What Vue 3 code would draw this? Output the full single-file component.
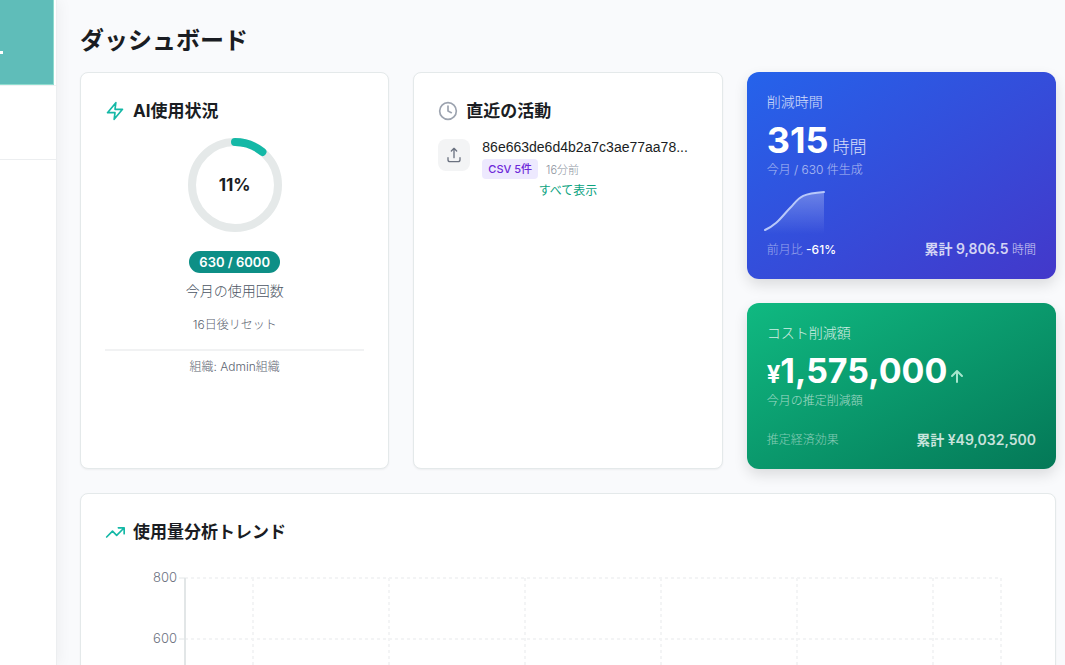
<script setup>
import { ref, computed, onMounted, onBeforeUnmount } from 'vue'

const usage = { percent: 11, used: 630, limit: 6000 }
const radius = 43
const circumference = 2 * Math.PI * radius
const dash = computed(() => `${(circumference * usage.percent) / 100} ${circumference}`)

const chart = ref(null)
const chartWidth = ref(926)
const axisX = 80
const top = 8
const step = 61
const ticks = [800, 600, 400, 200, 0]
const plotRight = computed(() => chartWidth.value - 30)
const columns = computed(() => {
  const band = (plotRight.value - axisX) / 6
  const xs = [0, 1, 2, 3, 4, 5].map((i) => Math.round(axisX + band * (i + 0.5)))
  return [...xs, plotRight.value]
})

let observer
onMounted(() => {
  observer = new ResizeObserver(([entry]) => {
    chartWidth.value = Math.round(entry.contentRect.width)
  })
  observer.observe(chart.value)
})
onBeforeUnmount(() => observer.disconnect())
</script>

<template>
  <div class="shell">
    <aside class="sidebar">
      <div class="brand"><span class="brand-mark"></span></div>
      <div class="sidebar-section"></div>
    </aside>

    <main class="main">
      <h1>ダッシュボード</h1>

      <div class="cards">
        <section class="card">
          <h2>
            <svg class="icon teal" viewBox="0 0 24 24"><path d="M13 2 3 14h9l-1 8 10-12h-9l1-8z" /></svg>
            <span>AI使用状況</span>
          </h2>
          <div class="usage">
            <div class="ring">
              <svg viewBox="0 0 96 96">
                <circle class="track" cx="48" cy="48" :r="radius" />
                <circle class="value" cx="48" cy="48" :r="radius" :stroke-dasharray="dash" transform="rotate(-90 48 48)" />
              </svg>
              <strong>{{ usage.percent }}%</strong>
            </div>
            <span class="pill">{{ usage.used }} / {{ usage.limit }}</span>
            <p class="usage-label">今月の使用回数</p>
            <p class="small">16日後リセット</p>
          </div>
          <p class="small org">組織: Admin組織</p>
        </section>

        <section class="card">
          <h2>
            <svg class="icon gray" viewBox="0 0 24 24"><circle cx="12" cy="12" r="10" /><path d="M12 6v6l4 2" /></svg>
            <span>直近の活動</span>
          </h2>
          <div class="activity">
            <div class="activity-icon">
              <svg viewBox="0 0 24 24"><path d="M3 16v3a3 3 0 0 0 3 3h12a3 3 0 0 0 3-3v-3M16 6l-4-4-4 4M12 2v14" /></svg>
            </div>
            <div class="activity-body">
              <p class="file">86e663de6d4b2a7c3ae77aa78...</p>
              <div class="meta">
                <span class="tag">CSV 5件</span>
                <span class="time">16分前</span>
              </div>
            </div>
          </div>
          <a class="more" href="#">すべて表示</a>
        </section>

        <div class="stats">
          <section class="stat blue">
            <p class="stat-title">削減時間</p>
            <p class="stat-value"><strong>315</strong><span class="unit">時間</span></p>
            <p class="stat-note">今月 / 630 件生成</p>
            <svg class="spark" viewBox="0 0 64 48">
              <defs>
                <linearGradient id="spark-fill" x1="0" y1="0" x2="0" y2="1">
                  <stop offset="0" stop-color="#fff" stop-opacity=".28" />
                  <stop offset="1" stop-color="#fff" stop-opacity="0" />
                </linearGradient>
              </defs>
              <path fill="url(#spark-fill)" d="M2 42C15 36 19 28 28 19C37 9 37 6 61 4V46H2Z" />
              <path class="spark-line" d="M2 42C15 36 19 28 28 19C37 9 37 6 61 4" />
            </svg>
            <div class="stat-foot">
              <span class="foot-label">前月比 <b>-61%</b></span>
              <span class="total">累計 9,806.5 <small>時間</small></span>
            </div>
          </section>

          <section class="stat green">
            <p class="stat-title">コスト削減額</p>
            <p class="stat-value">
              <span class="yen">¥</span><strong class="amount">1,575,000</strong>
              <svg class="arrow" viewBox="0 0 16 16"><path d="M8 15V4M3 9l5-5 5 5" /></svg>
            </p>
            <p class="stat-note">今月の推定削減額</p>
            <div class="stat-foot">
              <span class="foot-label">推定経済効果</span>
              <span class="total">累計 ¥49,032,500</span>
            </div>
          </section>
        </div>
      </div>

      <section class="card trend">
        <h2>
          <svg class="icon teal" viewBox="0 0 24 24"><path d="m2 18 7-7 5 5 8.500-8.500M16 7h7v7" /></svg>
          <span>使用量分析トレンド</span>
        </h2>
        <div ref="chart" class="chart">
          <svg :width="chartWidth" height="300">
            <g class="grid">
              <line v-for="(t, i) in ticks" :key="t" :x1="axisX" :x2="plotRight" :y1="top + i * step" :y2="top + i * step" />
              <line v-for="x in columns" :key="x" :x1="x" :x2="x" :y1="top" :y2="top + 4 * step" />
            </g>
            <g class="axis">
              <line :x1="axisX" :x2="axisX" :y1="top" :y2="top + 4 * step" />
              <line v-for="(t, i) in ticks" :key="t" class="tick" :x1="axisX - 6" :x2="axisX" :y1="top + i * step" :y2="top + i * step" />
            </g>
            <text v-for="(t, i) in ticks" :key="t" :x="axisX - 8" :y="top + i * step + 4">{{ t }}</text>
          </svg>
        </div>
      </section>
    </main>
  </div>
</template>

<style>
body {
  background: #f9fafc;
}
</style>

<style scoped>
* {
  box-sizing: border-box;
}
h1, h2, p {
  margin: 0;
}
.shell {
  display: flex;
  height: 100vh;
  overflow: hidden;
  background: #f9fafc;
  color: #1a1d23;
  font-family: Inter, "Noto Sans CJK JP", sans-serif;
}
.sidebar {
  flex: 0 0 57px;
  background: #fff;
  border-right: 1px solid #eceef0;
  box-shadow: 2px 0 14px rgba(0, 0, 0, 0.05);
}
.brand {
  height: 85px;
  margin-right: 2px;
  padding-top: 51px;
  background: #5fbdb9;
  border-right: 1px solid #8fdccf;
  border-bottom: 1px solid #8fdccf;
}
.brand-mark {
  display: block;
  width: 3px;
  height: 3px;
  background: #fff;
}
.sidebar-section {
  height: 75px;
  border-top: 1px solid #f1f2f4;
  border-bottom: 1px solid #eceef0;
}
.main {
  flex: 1;
  min-width: 0;
  padding: 25px 9px 24px 23px;
}
h1 {
  margin-bottom: 15px;
  font-size: 24px;
  line-height: 32px;
  font-weight: 600;
}
.cards {
  display: grid;
  grid-template-columns: repeat(3, minmax(0, 1fr));
  gap: 24px;
}
.card {
  padding: 24px;
  background: #fff;
  border: 1px solid #e4e9ea;
  border-radius: 8px;
  box-shadow: 0 1px 2px rgba(0, 0, 0, 0.05);
}
h2 {
  display: flex;
  align-items: center;
  gap: 8px;
  font-size: 17px;
  line-height: 28px;
  font-weight: 700;
}
.icon {
  width: 20px;
  height: 20px;
}
.icon, .activity-icon svg, .arrow, .spark-line {
  fill: none;
  stroke: currentColor;
  stroke-width: 2;
  stroke-linecap: round;
  stroke-linejoin: round;
}
.teal {
  color: #14b8a6;
}
.gray {
  color: #9ca3af;
}
.usage {
  display: flex;
  flex-direction: column;
  align-items: center;
  padding: 12px 0 15px;
  border-bottom: 2px solid #f1f2f3;
}
.ring {
  display: grid;
  place-items: center;
  width: 96px;
  height: 96px;
  margin-bottom: 18px;
}
.ring > * {
  grid-area: 1 / 1;
}
.ring circle {
  fill: none;
  stroke-width: 8;
}
.track {
  stroke: #e5e9e9;
}
.ring .value {
  stroke: #14b8a6;
  stroke-linecap: round;
}
.ring strong {
  font-size: 17px;
  line-height: 24px;
}
.pill {
  padding: 0 10px;
  border-radius: 11px;
  background: #0d8f86;
  color: #fff;
  font-size: 13px;
  line-height: 22px;
  font-weight: 600;
}
.usage-label {
  margin: 8px 0 15px;
  color: #4b5563;
  font-size: 14px;
  line-height: 20px;
  font-weight: 300;
}
.small {
  color: #5b6370;
  font-size: 12px;
  line-height: 18px;
  font-weight: 300;
}
.org {
  padding-top: 7px;
  text-align: center;
}
.activity {
  display: flex;
  gap: 12px;
  padding-top: 12px;
}
.activity-icon {
  display: grid;
  place-items: center;
  flex: 0 0 32px;
  height: 32px;
  margin-top: 2px;
  border-radius: 8px;
  background: #f3f4f5;
  color: #6b7280;
}
.activity-icon svg {
  width: 16px;
  height: 16px;
}
.activity-body {
  min-width: 0;
}
.file {
  overflow: hidden;
  font-family: "Liberation Sans", sans-serif;
  font-size: 14px;
  line-height: 20px;
  white-space: nowrap;
  text-overflow: ellipsis;
}
.meta {
  display: flex;
  align-items: center;
  gap: 8px;
  padding-top: 2px;
}
.tag {
  padding: 0 6px;
  border-radius: 4px;
  background: #ede9fe;
  color: #6d28d9;
  font-size: 11px;
  line-height: 20px;
  font-weight: 500;
}
.time {
  color: #8b929e;
  font-size: 11px;
  font-weight: 300;
}
.more {
  display: block;
  margin-top: 3px;
  color: #0ba37f;
  font-size: 12px;
  line-height: 18px;
  text-align: center;
  text-decoration: none;
}
.stats {
  display: flex;
  flex-direction: column;
  gap: 24px;
}
.stat {
  display: flex;
  flex-direction: column;
  padding: 20px 20px 19px;
  border-radius: 12px;
  color: #fff;
  box-shadow: 0 6px 14px rgba(0, 0, 0, 0.12);
}
.blue {
  min-height: 207px;
  background: linear-gradient(to bottom right, #2563eb, #4338ca);
}
.green {
  min-height: 166px;
  background: linear-gradient(to bottom right, #10b981, #047857);
}
.stat-title {
  font-size: 14px;
  line-height: 20px;
  font-weight: 300;
  opacity: 0.8;
}
.stat-value {
  display: flex;
  align-items: baseline;
  padding-top: 8px;
}
.stat-value strong {
  font-size: 36px;
  line-height: 40px;
}
.stat-value .amount {
  font-size: 34px;
}
.unit {
  margin-left: 4px;
  font-size: 17px;
  line-height: 24px;
  font-weight: 300;
  opacity: 0.8;
}
.yen {
  font-size: 24px;
  font-weight: 700;
}
.arrow {
  width: 16px;
  height: 16px;
  margin-left: 2px;
  color: #a7e6cd;
}
.stat-note {
  font-size: 12px;
  line-height: 20px;
  font-weight: 300;
  opacity: 0.6;
}
.spark {
  flex: none;
  width: 64px;
  height: 48px;
  margin: 8px 0 0 -4px;
}
.spark-line {
  stroke: #b8c8fa;
}
.stat-foot {
  display: flex;
  align-items: center;
  justify-content: space-between;
  margin-top: auto;
  line-height: 20px;
}
.foot-label {
  color: rgba(255, 255, 255, 0.5);
  font-size: 12px;
  font-weight: 300;
}
.foot-label b {
  color: #fff;
  font-weight: 500;
}
.total {
  color: rgba(255, 255, 255, 0.78);
  font-size: 14px;
  font-weight: 600;
}
.total small {
  font-size: 12px;
  font-weight: 300;
}
.trend {
  margin-top: 24px;
}
.chart {
  margin-top: 24px;
}
.chart svg {
  display: block;
}
.grid line {
  stroke: #f3f4f5;
  stroke-width: 2;
  stroke-dasharray: 3 3;
}
.axis line {
  stroke: #e2e6e7;
  stroke-width: 2;
}
.axis .tick {
  stroke-width: 1;
}
.chart text {
  fill: #6b7280;
  font-size: 13px;
  font-weight: 300;
  text-anchor: end;
}
</style>
